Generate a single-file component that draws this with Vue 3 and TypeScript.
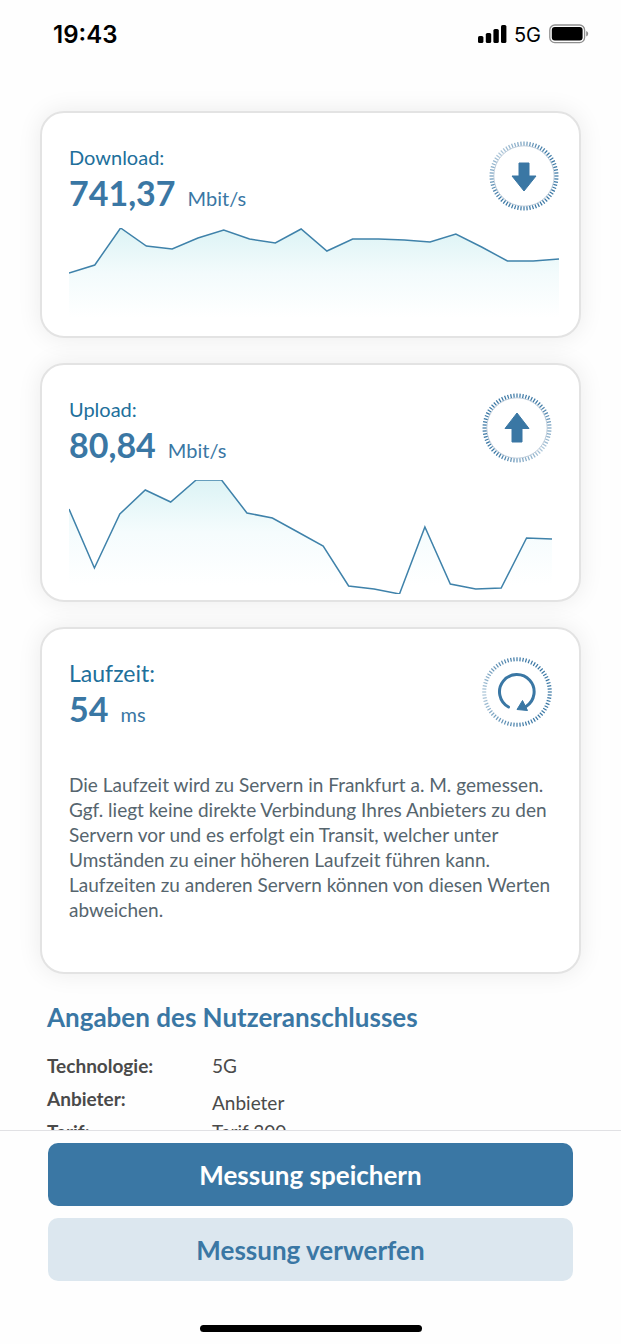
<script setup lang="ts">
interface Tick {
  angle: number
  opacity: number
}

interface Detail {
  term: string
  value: string
  low?: boolean
}

const downloadSamples: number[] = [45, 37, 0, 18, 21, 10, 2, 11, 15, 1, 23, 11, 11, 12, 14, 6, 19, 33, 33, 31]
const uploadSamples: number[] = [29, 88, 34, 10, 22, 0, 0, 33, 38, 52, 66, 106, 109, 114, 47, 104, 109, 108, 58, 59]

const STEP = 10
const CHART_WIDTH = (downloadSamples.length - 1) * STEP

const line = (samples: number[]): string => samples.map((y, i) => `${i * STEP},${y}`).join(' ')
const area = (samples: number[], height: number): string =>
  `0,${height} ${line(samples)} ${CHART_WIDTH},${height}`

const TICKS = 68
const dial = (fadeAngle: number): Tick[] =>
  Array.from({ length: TICKS }, (_, i) => {
    const angle = (i * 360) / TICKS
    const distance = Math.abs(((angle - fadeAngle + 540) % 360) - 180)
    return { angle, opacity: Math.min(1, 0.4 + distance / 150) }
  })

const downloadDial = dial(315)
const uploadDial = dial(130)
const latencyDial = dial(265)

const details: Detail[] = [
  { term: 'Technologie:', value: '5G' },
  { term: 'Anbieter:', value: 'Anbieter', low: true },
  { term: 'Tarif:', value: 'Tarif 300' },
]
</script>

<template>
  <div class="screen">
    <header class="status">
      <span class="time">19:43</span>
      <span class="indicators">
        <svg width="29" height="18" viewBox="0 0 29 18" aria-hidden="true">
          <rect x="0" y="11" width="5.4" height="7" rx="1.6" />
          <rect x="7.8" y="8" width="5.4" height="10" rx="1.6" />
          <rect x="15.4" y="4" width="5.4" height="14" rx="1.6" />
          <rect x="23" y="0" width="5.4" height="18" rx="1.6" />
        </svg>
        <span class="network">5G</span>
        <svg width="40" height="20" viewBox="0 0 40 20" aria-hidden="true">
          <rect x="0.8" y="1" width="34.8" height="17.6" rx="5" fill="none" stroke="#8e8e8e" stroke-width="1.3" />
          <rect x="2.8" y="3" width="30.8" height="13.6" rx="3" />
          <path d="M37.2 7 Q39.2 7.6 39.2 9.8 Q39.2 12 37.2 12.6Z" fill="#8e8e8e" />
        </svg>
      </span>
    </header>

    <main class="content">
      <section class="card download">
        <div class="top">
          <div>
            <h2 class="label">Download:</h2>
            <p class="reading"><strong>741,37</strong><span>Mbit/s</span></p>
          </div>
          <svg class="dial" viewBox="-35 -35 70 70" aria-hidden="true">
            <circle r="30.2" class="ring" />
            <line v-for="t in downloadDial" :key="t.angle" y1="-34.5" y2="-30.5" :transform="`rotate(${t.angle})`" :opacity="t.opacity" class="tick" />
            <path class="solid" d="M-5 -13 H5 V0 H12 L0 15 L-12 0 H-5Z" />
          </svg>
        </div>
        <svg class="chart short" :viewBox="`0 0 ${CHART_WIDTH} 102`" preserveAspectRatio="none" role="img" aria-label="Download">
          <defs>
            <linearGradient id="fade-down" gradientUnits="userSpaceOnUse" x1="0" y1="0" x2="0" y2="90">
              <stop offset="0" stop-color="#dcf3f5" />
              <stop offset="0.5" stop-color="#f3fbfc" />
              <stop offset="1" stop-color="#fff" />
            </linearGradient>
          </defs>
          <polygon :points="area(downloadSamples, 102)" fill="url(#fade-down)" />
          <polyline :points="line(downloadSamples)" class="curve" />
        </svg>
      </section>

      <section class="card upload">
        <div class="top">
          <div>
            <h2 class="label">Upload:</h2>
            <p class="reading"><strong>80,84</strong><span>Mbit/s</span></p>
          </div>
          <svg class="dial" viewBox="-35 -35 70 70" aria-hidden="true">
            <circle r="30.2" class="ring" />
            <line v-for="t in uploadDial" :key="t.angle" y1="-34.5" y2="-30.5" :transform="`rotate(${t.angle})`" :opacity="t.opacity" class="tick" />
            <path class="solid" d="M-5 14 H5 V0.5 H12 L0 -15 L-12 0.5 H-5Z" />
          </svg>
        </div>
        <svg class="chart tall" :viewBox="`0 0 ${CHART_WIDTH} 114`" preserveAspectRatio="none" role="img" aria-label="Upload">
          <defs>
            <linearGradient id="fade-up" gradientUnits="userSpaceOnUse" x1="0" y1="0" x2="0" y2="105">
              <stop offset="0" stop-color="#dcf3f5" />
              <stop offset="0.5" stop-color="#f5fcfd" />
              <stop offset="1" stop-color="#fff" />
            </linearGradient>
          </defs>
          <polygon :points="area(uploadSamples, 114)" fill="url(#fade-up)" />
          <polyline :points="line(uploadSamples)" class="curve" />
        </svg>
      </section>

      <section class="card latency">
        <div class="top">
          <div>
            <h2 class="label large">Laufzeit:</h2>
            <p class="reading"><strong>54</strong><span>ms</span></p>
          </div>
          <svg class="dial" viewBox="-35 -35 70 70" aria-hidden="true">
            <line v-for="t in latencyDial" :key="t.angle" y1="-34.8" y2="-30.8" :transform="`rotate(${t.angle})`" :opacity="t.opacity" class="tick" />
            <path d="M-8.5 15 A17.3 17.3 0 1 1 9 14.5" fill="none" stroke="#3a77a4" stroke-width="3" stroke-linecap="round" />
            <path class="solid" d="M5.5 8.5 L10.5 18.5 L0 17.5Z" />
          </svg>
        </div>
        <p class="note">
          Die Laufzeit wird zu Servern in Frankfurt a. M. gemessen. Ggf. liegt keine direkte Verbindung Ihres Anbieters zu den Servern vor und es erfolgt ein Transit, welcher unter Umständen zu einer höheren Laufzeit führen kann. Laufzeiten zu anderen Servern können von diesen Werten abweichen.
        </p>
      </section>

      <section class="connection">
        <h2>Angaben des Nutzeranschlusses</h2>
        <dl>
          <template v-for="d in details" :key="d.term">
            <dt>{{ d.term }}</dt>
            <dd :class="{ low: d.low }">{{ d.value }}</dd>
          </template>
        </dl>
      </section>
    </main>

    <footer class="actions">
      <button type="button" class="primary">Messung speichern</button>
      <button type="button" class="secondary">Messung verwerfen</button>
      <div class="home"></div>
    </footer>
  </div>
</template>

<style>
body {
  margin: 0;
  background: #fefefe;
}
</style>

<style scoped>
.screen {
  display: flex;
  flex-direction: column;
  height: 100vh;
  background: #fefefe;
  font-family: Lato, "Liberation Sans", sans-serif;
  color: #3a77a4;
}

h2,
p,
dl,
dd {
  margin: 0;
}

.status {
  flex: none;
  display: flex;
  justify-content: space-between;
  align-items: center;
  height: 68px;
  padding: 0 32px 0 53px;
  font-family: Inter, "Liberation Sans", sans-serif;
  color: #000;
}

.time {
  font-size: 24px;
  font-weight: 600;
}

.indicators {
  display: flex;
  align-items: center;
}

.network {
  margin: 2px 8px 0 7px;
  font-size: 20px;
}

.content {
  flex: 1;
  min-height: 0;
  overflow: hidden;
  display: flex;
  flex-direction: column;
  gap: 25px;
  padding: 43px 40px 0;
}

.card {
  flex: none;
  box-sizing: border-box;
  padding: 28px 27px 6px;
  border: 2px solid #e3e3e3;
  border-radius: 24px;
  background: #fff;
  box-shadow: 0 0 24px rgba(0, 0, 0, 0.08);
}

.download {
  padding-right: 20px;
}

.latency {
  padding-bottom: 50px;
}

.top {
  display: flex;
  justify-content: space-between;
  align-items: flex-start;
  height: 87px;
}

.label {
  font-size: 20px;
  line-height: 32px;
  font-weight: 400;
  color: #216f9b;
}

.label.large {
  font-size: 23px;
}

.reading {
  display: flex;
  align-items: baseline;
  gap: 12px;
  line-height: 40px;
  font-size: 20px;
}

.reading strong {
  font-size: 34px;
  font-weight: 700;
}

.dial {
  flex: none;
  width: 70px;
  height: 70px;
}

.tick {
  stroke: #3a77a4;
  stroke-width: 1.2;
}

.ring {
  fill: none;
  stroke: #c3d0dd;
  stroke-width: 1;
}

.solid {
  fill: #3a77a4;
  stroke: #3a77a4;
  stroke-width: 1;
  stroke-linejoin: round;
}

.chart {
  display: block;
  width: 100%;
}

.short {
  height: 102px;
}

.tall {
  height: 114px;
}

.curve {
  fill: none;
  stroke: #3f82aa;
  stroke-width: 1.5;
  vector-effect: non-scaling-stroke;
}

.note {
  margin-top: 28px;
  font-size: 19px;
  line-height: 25px;
  color: #56656e;
}

.connection {
  flex: none;
  padding: 0 7px;
}

.connection h2 {
  font-size: 26px;
  line-height: 36px;
  font-weight: 700;
}

.connection dl {
  display: grid;
  grid-template-columns: 165px 1fr;
  grid-auto-rows: 33px;
  margin-top: 16px;
  font-size: 19px;
  line-height: 29px;
  color: #4a4a4a;
}

.connection dt {
  font-weight: 700;
}

.low {
  align-self: end;
}

.actions {
  flex: none;
  display: flex;
  flex-direction: column;
  gap: 12px;
  padding: 12px 48px;
  border-top: 1px solid #e1e1e4;
}

button {
  height: 63px;
  padding: 0;
  border: 0;
  border-radius: 10px;
  font: inherit;
  font-size: 26px;
  font-weight: 700;
}

.primary {
  background: #3a77a4;
  color: #fff;
}

.secondary {
  background: #dce7ef;
  color: #3a77a4;
}

.home {
  align-self: center;
  width: 222px;
  height: 7px;
  margin-top: 32px;
  border-radius: 4px;
  background: #000;
}
</style>
